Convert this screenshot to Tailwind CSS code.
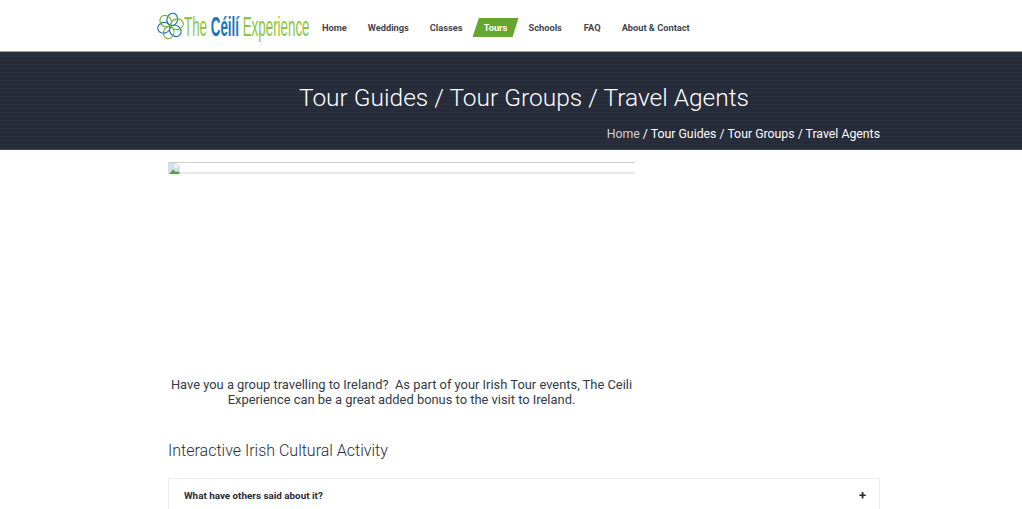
<!DOCTYPE html>
<html><head><meta charset="utf-8"><script src="https://cdn.jsdelivr.net/npm/@tailwindcss/browser@4"></script></head>
<body class="bg-white font-['Roboto',sans-serif] h-[509px] overflow-hidden">
<header class="h-[52px] border-b border-[#9a9da6] flex items-center pl-[157px]">
  <a class="flex items-center w-[165px] h-[30px] shrink-0">
    <svg class="w-[27px] h-[28px] shrink-0" viewBox="0 0 28 28" fill="none" stroke-width="1.2">
      <g stroke="#1c75b8"><ellipse cx="14" cy="7" rx="5.5" ry="6.5" transform="rotate(15 14 14)"/><ellipse cx="14" cy="7" rx="5.5" ry="6.5" transform="rotate(135 14 14)"/><ellipse cx="14" cy="7" rx="5.5" ry="6.5" transform="rotate(255 14 14)"/></g>
      <g stroke="#6fb52c"><ellipse cx="14" cy="7" rx="5.5" ry="6.5" transform="rotate(75 14 14)"/><ellipse cx="14" cy="7" rx="5.5" ry="6.5" transform="rotate(195 14 14)"/><ellipse cx="14" cy="7" rx="5.5" ry="6.5" transform="rotate(315 14 14)"/></g>
    </svg>
    <span class="inline-block font-['Liberation_Sans',sans-serif] text-[27px] leading-none text-[#8cc63f] whitespace-nowrap origin-left scale-x-[0.495] mt-[3px]">The <b class="text-[#1c75b8]">Céilí</b> Experience</span>
  </a>
  <nav class="flex items-center text-[9.25px] font-bold text-[#3f4450] leading-none mt-[4px]">
    <a>Home</a>
    <a class="ml-[21px]">Weddings</a>
    <a class="ml-[21px]">Classes</a>
    <a class="ml-[10px] w-[46px] h-[19px] flex items-center justify-center bg-[#62a82f] text-white [clip-path:polygon(14%_0,100%_0,87%_100%,0_100%)]">Tours</a>
    <a class="ml-[10px]">Schools</a>
    <a class="ml-[22px]">FAQ</a>
    <a class="ml-[21px]">About &amp; Contact</a>
  </nav>
</header>
<section class="h-[98px] bg-[#272c3b] bg-[repeating-linear-gradient(0deg,#ffffff03_0,#ffffff03_1px,transparent_1px,transparent_4px)] relative border-b border-[#3d4250]">
  <h1 class="pt-[30px] text-center pl-[26px] text-[24.5px] leading-[32px] font-light text-white">Tour Guides / Tour Groups / Travel Agents</h1>
  <p class="w-[712px] ml-[168px] mt-[12px] text-right text-[12.3px] leading-[16px] text-white"><span class="text-[#d0d2d6]">Home</span> / Tour Guides / Tour Groups / Travel Agents</p>
</section>
<main class="w-[712px] ml-[168px]">
  <div class="w-[467px] mt-[12px] h-[12px] border-t border-[#cfcfcf] border-b-2 border-b-[#e8e8e8] relative">
    <svg class="absolute left-0 top-0 w-[12px] h-[11px]" viewBox="0 0 12 11"><path d="M0 0H8L12 3V11H0Z" fill="#d5e0ef"/><path d="M1 11 L5 6.5 L8 9 L10 8 L12 11Z" fill="#5da335"/><circle cx="8" cy="3" r="1.6" fill="#fff"/></svg>
  </div>
  <p class="w-[467px] mt-[203px] text-center text-[12.9px] leading-[15px] text-[#333a48]">Have you a group travelling to Ireland?&nbsp; As part of your Irish Tour events, The Ceili Experience can be a great added bonus to the visit to Ireland.</p>
  <h2 class="mt-[33px] text-[16px] leading-[22px] font-light text-[#272c3b]">Interactive Irish Cultural Activity</h2>
  <div class="mt-[16px] h-[31px] border-t border-x border-[#eeeeee] flex justify-between pl-[15px] pr-[13px] pt-[10px] text-[#272c3b]">
    <span class="text-[9.85px] leading-[14px] font-bold">What have others said about it?</span>
    <span class="text-[13px] leading-[14px] font-bold">+</span>
  </div>
</main>
</body></html>
